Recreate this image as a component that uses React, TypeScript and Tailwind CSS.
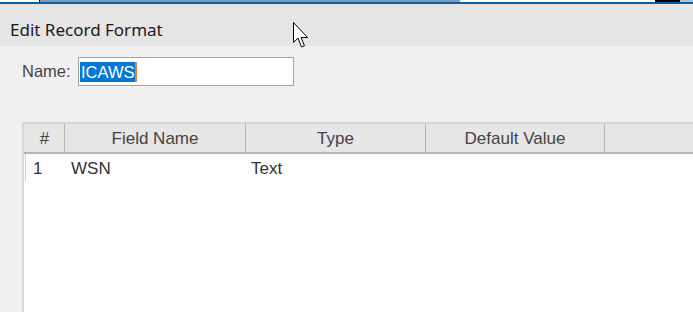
import React from "react";

export default function App() {
  return (
    <div className="relative w-[693px] h-[312px] overflow-hidden bg-[#f0f0f0]" style={{ fontFamily: '"Liberation Sans", Arial, sans-serif' }}>
      {/* top strip */}
      <div className="flex h-[2px]">
        <div className="w-[39px] bg-white" />
        <div className="w-[1px] bg-black" />
        <div className="w-[420px] bg-[#7d9bb8]" />
        <div className="w-[195px] bg-white" />
        <div className="w-[25px] bg-black" />
        <div className="flex-1 bg-[#a9c4e0]" />
      </div>
      <div className="h-[2px] bg-[#0b5ea3]" />
      {/* header */}
      <div className="h-[42px] bg-[#e5e5e5] flex items-center pl-[10px] pt-[10px]">
        <span className="text-[17px] text-[#1a1a1a]" style={{ fontFamily: '"Noto Sans", "Open Sans", sans-serif' }}>Edit Record Format</span>
      </div>
      {/* name row */}
      <div className="flex items-center pl-[22px] mt-[11px] h-[29px]">
        <span className="text-[16.5px] text-[#444] w-[56px]">Name:</span>
        <div className="w-[216px] h-[29px] border border-[#a5a5a5] bg-white flex items-center pl-[1px]">
          <span className="bg-[#0078d7] text-white text-[16.5px] leading-[20px] px-[1px] border-r-2 border-[#e8812a]">ICAWS</span>
        </div>
      </div>
      {/* table */}
      <div className="ml-[22px] mt-[36px] h-[200px] border-l-2 border-t-2 border-[#d6d6d6] bg-[#fdfdfd]">
        <div className="flex h-[30px] bg-[#e6e6e6] border-b-2 border-[#b4b4b4] text-[17px] text-[#444] pl-[1px] pt-[2px]">
          <div className="w-[40px] flex items-center justify-center border-r border-[#b4b4b4] -mt-[2px]"><span className="pt-[2px]">#</span></div>
          <div className="w-[181px] flex items-center justify-center border-r border-[#b4b4b4] -mt-[2px]"><span className="pt-[2px]">Field Name</span></div>
          <div className="w-[180px] flex items-center justify-center border-r border-[#b4b4b4] -mt-[2px]"><span className="pt-[2px]">Type</span></div>
          <div className="w-[179px] flex items-center justify-center border-r border-[#b4b4b4] -mt-[2px]"><span className="pt-[2px]">Default Value</span></div>
          <div className="flex-1" />
        </div>
        <div className="flex h-[27px] items-center text-[17px] text-[#333] ml-[1px] border-l border-[#d0d0d0] pt-[2px]">
          <div className="w-[45px] pl-[7px]">1</div>
          <div className="w-[180px]">WSN</div>
          <div className="w-[180px]">Text</div>
        </div>
      </div>
      {/* mouse cursor */}
      <svg className="absolute left-[293px] top-[22px]" width="19" height="28" viewBox="0 0 19 28">
        <path d="M0.5 0.5 L0.5 20.5 L5 16 L8.5 25 L11.5 23.8 L8 15.5 L14.5 15.5 Z" fill="white" stroke="black" strokeWidth="1" strokeLinejoin="miter" />
      </svg>
    </div>
  );
}
